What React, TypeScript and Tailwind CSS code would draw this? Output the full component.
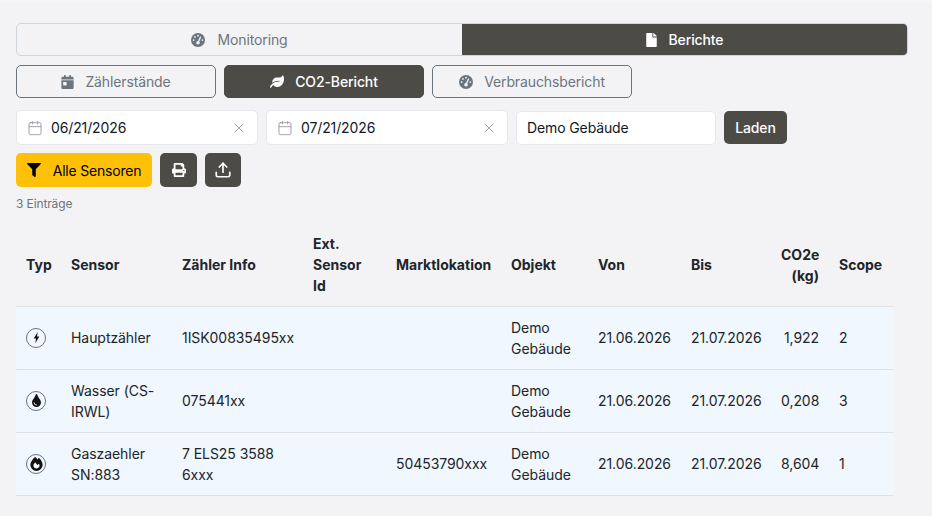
import { Calendar, Upload, X } from "lucide-react";
import type { ReactNode } from "react";
import { FaFile, FaFilter, FaLeaf, FaPrint, FaTint, FaCalendarDay } from "react-icons/fa";
import { FaFire, FaGaugeHigh } from "react-icons/fa6";

function BoltIcon() {
  return (
    <svg viewBox="0 0 24 24" className="w-[15px] h-[15px]" fill="currentColor">
      <path d="M14 3 7.5 13.5h3.8L10 21l6.5-10.8h-3.7L14 3Z" />
    </svg>
  );
}

const rows = [
  { icon: <BoltIcon />, sensor: "Hauptzähler", info: "1ISK00835495xx", lokation: "", co2: "1,922", scope: "2" },
  { icon: <FaTint className="w-[13px] h-[13px]" />, sensor: "Wasser (CS-IRWL)", info: "075441xx", lokation: "", co2: "0,208", scope: "3" },
  { icon: <FaFire className="w-[13px] h-[14px]" />, sensor: "Gaszaehler SN:883", info: "7 ELS25 3588 6xxx", lokation: "50453790xxx", co2: "8,604", scope: "1" },
];

function SubTab({ icon, label, active }: { icon: ReactNode; label: string; active?: boolean }) {
  return (
    <button
      className={
        active
          ? "w-[200px] h-[33px] flex items-center justify-center gap-[11px] rounded-[5px] border border-[#4d4b46] bg-[#4d4b46] text-white font-medium"
          : "w-[200px] h-[33px] flex items-center justify-center gap-[11px] rounded-[5px] border border-[#6c757d] text-[#6c757d]"
      }
    >
      {icon}
      {label}
    </button>
  );
}

function DateField({ value }: { value: string }) {
  return (
    <div className="w-[242px] h-[35px] flex items-center bg-white border border-[#e5e7eb] rounded-[5px] pl-[10px] pr-[10px] text-[#111827]">
      <Calendar className="w-[16px] h-[16px] text-[#8f949c] mr-[8px]" strokeWidth={1.25} />
      <span className="flex-1">{value}</span>
      <X className="w-[16px] h-[16px] text-[#8f949c]" strokeWidth={1.25} />
    </div>
  );
}

export default function App() {
  return (
    <div className="min-h-[516px] bg-[#f3f3f6] pt-[23px] px-4 text-[14px] leading-[21px] tracking-[-0.12px] text-[#212529] font-['Inter',sans-serif] border-t-2 border-[#f6f6f8] box-border overflow-hidden">
      <div className="-mt-[2px] w-[892px] h-[33px] flex rounded-[5px] border border-[#ced4da] overflow-hidden">
        <div className="flex-1 flex items-center justify-center gap-[12px] text-[#6c757d]">
          <FaGaugeHigh className="w-[14px] h-[14px]" />
          Monitoring
        </div>
        <div className="w-[445px] flex items-center justify-center gap-[12px] bg-[#4d4b46] text-white font-medium">
          <FaFile className="w-[11px] h-[14px]" />
          Berichte
        </div>
      </div>

      <div className="flex gap-2 mt-[9px]">
        <SubTab icon={<FaCalendarDay className="w-[13px] h-[14px]" />} label="Zählerstände" />
        <SubTab active icon={<FaLeaf className="w-[14px] h-[13px]" />} label="CO2-Bericht" />
        <SubTab icon={<FaGaugeHigh className="w-[14px] h-[14px]" />} label="Verbrauchsbericht" />
      </div>

      <div className="flex items-center gap-2 mt-3">
        <DateField value="06/21/2026" />
        <DateField value="07/21/2026" />
        <div className="w-[200px] h-[34px] flex items-center bg-white border border-[#e5e7eb] rounded-[5px] px-[10px] text-[#111827]">
          Demo Gebäude
        </div>
        <button className="w-[63px] h-[33px] rounded-[5px] bg-[#4d4b46] text-white font-medium">Laden</button>
      </div>

      <div className="flex gap-2 mt-2">
        <button className="w-[136px] h-[34px] flex items-center justify-center gap-[12px] rounded-[5px] bg-[#ffc107] text-black tracking-[-0.2px]">
          <FaFilter className="w-[14px] h-[14px]" />
          Alle Sensoren
        </button>
        <button className="w-[37px] h-[34px] flex items-center justify-center rounded-[5px] bg-[#4d4b46] text-white">
          <FaPrint className="w-[14px] h-[14px]" />
        </button>
        <button className="w-[36px] h-[34px] flex items-center justify-center rounded-[5px] bg-[#4d4b46] text-white">
          <Upload className="w-[18px] h-[18px]" strokeWidth={2.25} />
        </button>
      </div>

      <div className="mt-2 text-[12px] leading-[18px] text-[#6c757d]">3 Einträge</div>

      <table className="w-[877px] table-fixed mt-[11px] border-collapse">
        <colgroup>
          <col className="w-[45px]" />
          <col className="w-[111px]" />
          <col className="w-[131px]" />
          <col className="w-[83px]" />
          <col className="w-[115px]" />
          <col className="w-[87px]" />
          <col className="w-[93px]" />
          <col className="w-[90px]" />
          <col className="w-[58px]" />
          <col className="w-[64px]" />
        </colgroup>
        <thead>
          <tr className="h-[82px] border-b border-[#dee2e6] text-left text-[#212529] tracking-normal">
            <th className="px-[10px] font-bold">Typ</th>
            <th className="px-[10px] font-bold">Sensor</th>
            <th className="px-[10px] font-bold">Zähler Info</th>
            <th className="px-[10px] font-bold">Ext. Sensor Id</th>
            <th className="px-[10px] font-bold whitespace-nowrap">Marktlokation</th>
            <th className="px-[10px] font-bold">Objekt</th>
            <th className="px-[10px] font-bold">Von</th>
            <th className="px-[10px] font-bold">Bis</th>
            <th className="px-[10px] font-bold text-right">CO2e (kg)</th>
            <th className="px-[10px] font-bold">Scope</th>
          </tr>
        </thead>
        <tbody>
          {rows.map((row) => (
            <tr key={row.sensor} className="h-[63px] bg-[#f0f7ff] border-b border-[#dee2e6] text-[#212529] tracking-[-0.06px]">
              <td className="px-[10px]">
                <span className="w-[20px] h-[20px] flex items-center justify-center rounded-full border border-[#6b7280] text-[#111111]">
                  {row.icon}
                </span>
              </td>
              <td className="px-[10px]">{row.sensor}</td>
              <td className="px-[10px]">{row.info}</td>
              <td className="px-[10px]"></td>
              <td className="px-[10px]">{row.lokation}</td>
              <td className="px-[10px]">Demo Gebäude</td>
              <td className="px-[10px]">21.06.2026</td>
              <td className="px-[10px]">21.07.2026</td>
              <td className="px-[10px] text-right">{row.co2}</td>
              <td className="px-[10px]">{row.scope}</td>
            </tr>
          ))}
        </tbody>
      </table>
    </div>
  );
}
